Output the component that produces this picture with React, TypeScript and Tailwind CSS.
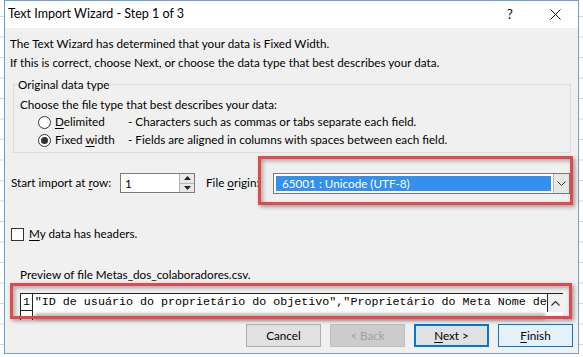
import React from "react";

const F = "font-['Lato',_'Liberation_Sans',_sans-serif]";

function Btn({ children, cls }: { children: React.ReactNode; cls: string }) {
  return (
    <div className={`w-[75px] h-[23px] flex items-center justify-center ${cls}`}>{children}</div>
  );
}

export default function App() {
  return (
    <div
      className={`relative w-[583px] h-[357px] overflow-hidden bg-white ${F} text-black bg-[linear-gradient(to_bottom,#d4d4d4_1px,transparent_1px)] bg-[length:100%_20.5px] bg-[position:0_16px]`}
    >
      <div className="ml-[4px] w-[575px] h-[354px] border border-[#6aa0d4] bg-[#f0f0f0] flex flex-col">
        {/* title bar */}
        <div className="h-[27px] bg-white flex items-center text-[12.5px] shrink-0">
          <span className="pl-[3px]">Text Import Wizard - Step 1 of 3</span>
          <div className="ml-auto flex items-center">
            <div className="w-[30px] text-center text-[13px]">?</div>
            <div className="w-[30px] ml-[15px] flex justify-center">
              <svg width="11" height="11" viewBox="0 0 11 11">
                <path d="M0.5 0.5 L10.5 10.5 M10.5 0.5 L0.5 10.5" stroke="#111" strokeWidth="1" />
              </svg>
            </div>
            <div className="w-[8px]" />
          </div>
        </div>

        {/* body */}
        <div className="flex flex-col text-[11.7px]">
          <div className="mt-[6px] h-[19px] leading-[19px] pl-[5px]">
            The Text Wizard has determined that your data is Fixed Width.
          </div>
          <div className="h-[19px] leading-[19px] pl-[5px]">
            If this is correct, choose Next, or choose the data type that best describes your data.
          </div>

          {/* group box */}
          <div className="relative mt-[12px] ml-[8px] w-[558px] h-[69px] border border-[#dcdcdc] pl-[6px] pt-[10px]">
            <div className="absolute left-[3px] top-[-10px] h-[19px] leading-[19px] px-[1px] bg-[#f0f0f0]">
              Original data type
            </div>
            <div className="h-[18px] leading-[18px]">Choose the file type that best describes your data:</div>
            <div className="h-[18px] flex items-center">
              <div className="ml-[18px] w-[13px] h-[13px] rounded-full border border-[#333] bg-white" />
              <div className="ml-[4px] w-[73px]">
                <u className="underline-offset-2">D</u>elimited
              </div>
              <div>- Characters such as commas or tabs separate each field.</div>
            </div>
            <div className="h-[18px] flex items-center">
              <div className="ml-[18px] w-[13px] h-[13px] rounded-full border border-[#333] bg-white flex items-center justify-center">
                <div className="w-[7px] h-[7px] rounded-full bg-[#333]" />
              </div>
              <div className="ml-[4px] w-[73px]">
                Fixed <u className="underline-offset-2">w</u>idth
              </div>
              <div>- Fields are aligned in columns with spaces between each field.</div>
            </div>
          </div>

          {/* start import row */}
          <div className="mt-[20px] h-[20px] flex items-center pl-[6px]">
            <div className="w-[109px]">
              Start import at <u className="underline-offset-2">r</u>ow:
            </div>
            <div className="w-[75px] h-[20px] border border-[#7a7a7a] bg-white flex">
              <div className="flex-1 pl-[4px] leading-[18px]">1</div>
              <div className="w-[15px] h-full flex flex-col border-l border-[#b5b5b5] bg-[#e9e9e9]">
                <div className="flex-1 flex items-center justify-center border-b border-[#b5b5b5]">
                  <svg width="7" height="4" viewBox="0 0 7 4">
                    <path d="M0 4 L3.5 0 L7 4 Z" fill="#222" />
                  </svg>
                </div>
                <div className="flex-1 flex items-center justify-center">
                  <svg width="7" height="4" viewBox="0 0 7 4">
                    <path d="M0 0 L3.5 4 L7 0 Z" fill="#222" />
                  </svg>
                </div>
              </div>
            </div>
            <div className="ml-[11px] w-[67px] whitespace-nowrap">
              File <u className="underline-offset-2">o</u>rigin:
            </div>
            <div className="w-[297px] h-[21px] flex border border-[#7a7a7a] bg-white">
              <div className="flex-1 p-[2px]">
                <div className="h-full bg-[#3390ee] text-white pl-[6px] leading-[15px]">65001 : Unicode (UTF-8)</div>
              </div>
              <div className="w-[16px] bg-[#e6e6e6] border-l border-[#b5b5b5] flex items-center justify-center">
                <svg width="9" height="5" viewBox="0 0 9 5">
                  <path d="M0.5 0.5 L4.5 4.5 L8.5 0.5" stroke="#333" strokeWidth="1" fill="none" />
                </svg>
              </div>
            </div>
          </div>

          {/* checkbox */}
          <div className="mt-[32px] h-[18px] flex items-center pl-[6px]">
            <div className="w-[13px] h-[13px] border border-[#333] bg-white" />
            <div className="ml-[5px]">
              <u className="underline-offset-2">M</u>y data has headers.
            </div>
          </div>

          {/* preview label */}
          <div className="mt-[22px] h-[18px] leading-[18px] pl-[15px]">
            Preview of file Metas_dos_colaboradores.csv.
          </div>

          {/* preview box */}
          <div className="mt-[10px] ml-[15px] w-[543px] h-[27px] bg-white border-l border-t border-[#222] flex font-['Liberation_Mono',_monospace] text-[11.7px]">
            <div className="w-[13px] flex flex-col border-r border-[#222]">
              <div className="h-[17px] leading-[17px] pl-[2px] border-b border-[#222]">1</div>
            </div>
            <div className="flex-1 flex flex-col">
              <div className="h-[17px] leading-[17px] pl-[2px] whitespace-nowrap overflow-hidden">
                "ID de usuário do proprietário do objetivo","Proprietário do Meta Nome de
              </div>
              <div className="mt-[2px] h-[7px] mx-[2px] bg-[#c4c4c4] blur-[1.5px]" />
            </div>
            <div className="w-[18px] border-l border-[#222] h-[18px] bg-[#f0f0f0] flex items-center justify-center">
              <svg width="9" height="5" viewBox="0 0 9 5">
                <path d="M0.5 4.5 L4.5 0.5 L8.5 4.5" stroke="#333" strokeWidth="1.2" fill="none" />
              </svg>
            </div>
          </div>

          {/* buttons */}
          <div className="mt-[4px] flex justify-end gap-[9px] pr-[5px] text-[11.7px]">
            <Btn cls="bg-[#e1e1e1] border border-[#adadad]">Cancel</Btn>
            <Btn cls="bg-[#cccccc] border border-[#bfbfbf] text-[#a0a0a0]">&lt; Back</Btn>
            <Btn cls="bg-[#e1e1e1] border-2 border-[#0078d7]">
              <span>
                <u className="underline-offset-2">N</u>ext &gt;
              </span>
            </Btn>
            <Btn cls="bg-[#e5f1fb] border border-[#0078d7]">
              <span>
                <u className="underline-offset-2">F</u>inish
              </span>
            </Btn>
          </div>
        </div>
      </div>

      {/* red highlight boxes */}
      <div className="absolute left-[258px] top-[156px] w-[315px] h-[49px] border-[3px] border-[#e5484c] shadow-[2px_2px_4px_rgba(0,0,0,0.35),inset_2px_2px_4px_rgba(0,0,0,0.3)]" />
      <div className="absolute left-[10px] top-[283px] w-[562px] h-[36px] border-[3px] border-[#e5484c] shadow-[2px_2px_4px_rgba(0,0,0,0.35),inset_2px_2px_4px_rgba(0,0,0,0.3)]" />
    </div>
  );
}
